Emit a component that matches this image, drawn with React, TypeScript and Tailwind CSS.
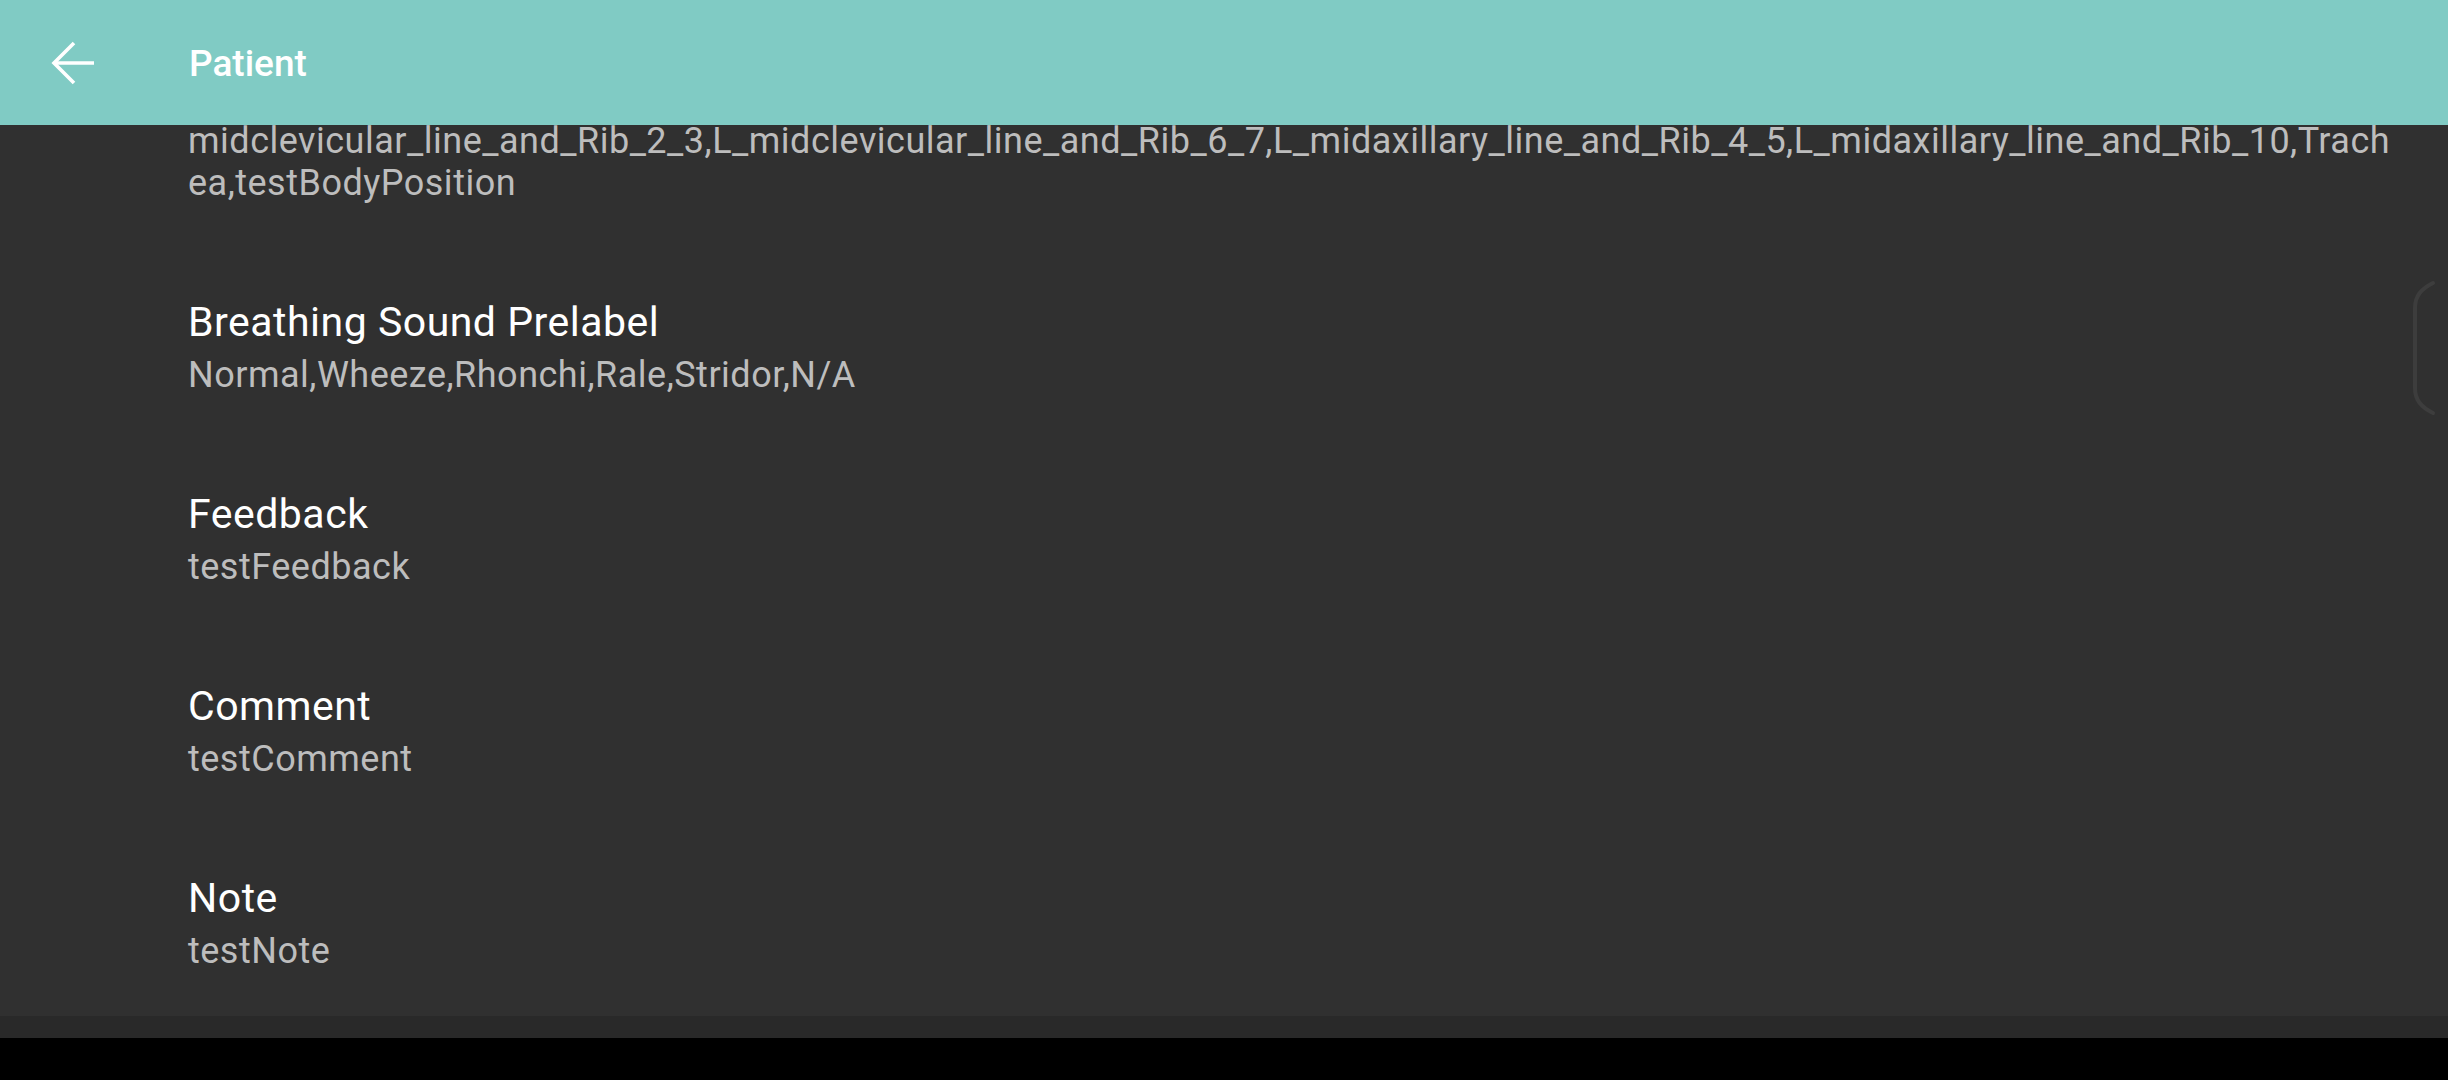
import React from "react";

type Field = { label: string; lines: string[] };

const fields: Field[] = [
  {
    label: "Body Position",
    lines: [
      "midclevicular_line_and_Rib_2_3,L_midclevicular_line_and_Rib_6_7,L_midaxillary_line_and_Rib_4_5,L_midaxillary_line_and_Rib_10,Trach",
      "ea,testBodyPosition",
    ],
  },
  { label: "Breathing Sound Prelabel", lines: ["Normal,Wheeze,Rhonchi,Rale,Stridor,N/A"] },
  { label: "Feedback", lines: ["testFeedback"] },
  { label: "Comment", lines: ["testComment"] },
  { label: "Note", lines: ["testNote"] },
];

function BackArrow() {
  return (
    <svg className="ml-[49px] h-12 w-12 shrink-0" viewBox="0 0 48 48" aria-hidden="true">
      <path d="M5 24H45" fill="none" stroke="#ffffff" strokeWidth="3.6" />
      <path d="M25 4L5 24L25 44" fill="none" stroke="#ffffff" strokeWidth="3.6" strokeLinejoin="miter" />
    </svg>
  );
}

function FieldRow({ field }: { field: Field }) {
  return (
    <div className="py-[47px]">
      <div className="text-[41px] leading-[48px] tracking-[0.5px] text-white">{field.label}</div>
      <div className="mt-[8px] text-[36px] leading-[42px] tracking-[0.5px] text-[#bdbdbd]">
        {field.lines.map((l) => (
          <div key={l} className="whitespace-nowrap">
            {l}
          </div>
        ))}
      </div>
    </div>
  );
}

export default function App() {
  return (
    <div
      className="flex h-[1080px] w-[2448px] flex-col overflow-hidden bg-black"
      style={{ fontFamily: "Roboto, 'Noto Sans', sans-serif" }}
    >
      <header className="flex h-[125px] shrink-0 items-center bg-[#80cbc4]">
        <BackArrow />
        <span className="ml-[92px] pt-[2px] text-[37px] font-medium text-white">Patient</span>
      </header>

      <main className="relative h-[891px] shrink-0 overflow-hidden bg-[#303030]">
        <div className="-mt-[108px] pl-[188px] pr-[40px]">
          {fields.map((f) => (
            <FieldRow key={f.label} field={f} />
          ))}
        </div>

        {/* edge scroll handle */}
        <svg className="absolute right-[4px] top-[153px] h-[140px] w-9" viewBox="0 0 36 140" aria-hidden="true">
          <path
            d="M25 5C13 11 7 18 7 30V110C7 122 13 129 25 135"
            fill="none"
            stroke="#3d3d3d"
            strokeWidth="4"
            strokeLinecap="round"
          />
        </svg>
      </main>

      <div className="h-[22px] shrink-0 bg-[#292929]" />
      <div className="flex-1 bg-black" />
    </div>
  );
}
